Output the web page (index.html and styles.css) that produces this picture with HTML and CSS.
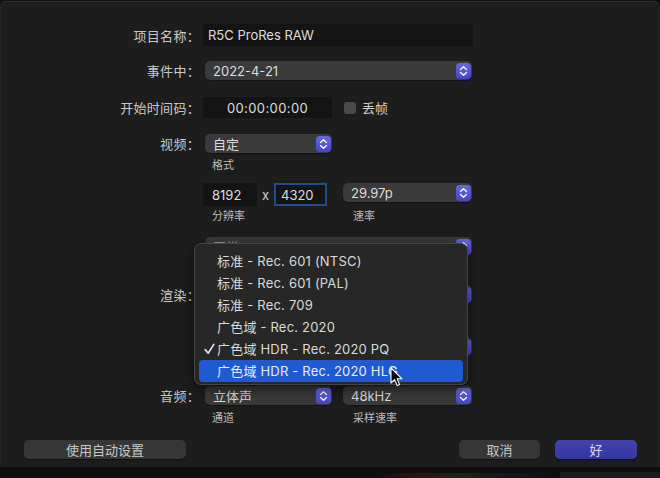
FILE: index.html
```html
<!DOCTYPE html>
<html lang="zh-CN">
<head>
<meta charset="utf-8">
<title>项目设置</title>
<link rel="stylesheet" href="styles.css">
</head>
<body>
<div class="window">
  <div class="form">
    <div class="row r1">
      <div class="label">项目名称：</div>
      <div class="field name">R5C ProRes RAW</div>
    </div>
    <div class="row r2">
      <div class="label">事件中：</div>
      <div class="popup wide"><span>2022-4-21</span><span class="stepper"><svg viewBox="0 0 15 16" width="15" height="16"><path d="M4.5 6.5 L7.5 3.8 L10.5 6.5 M4.5 9.5 L7.5 12.2 L10.5 9.5" fill="none" stroke="#fff" stroke-width="1.3" stroke-linecap="round" stroke-linejoin="round"/></svg></span></div>
    </div>
    <div class="row r3">
      <div class="label">开始时间码：</div>
      <div class="field timecode">00:00:00:00</div>
      <span class="checkbox"></span>
      <span class="check-label">丢帧</span>
    </div>
    <div class="row r4">
      <div class="label">视频：</div>
      <div class="popup half"><span>自定</span><span class="stepper"><svg viewBox="0 0 15 16" width="15" height="16"><path d="M4.5 6.5 L7.5 3.8 L10.5 6.5 M4.5 9.5 L7.5 12.2 L10.5 9.5" fill="none" stroke="#fff" stroke-width="1.3" stroke-linecap="round" stroke-linejoin="round"/></svg></span></div>
    </div>
    <div class="sub s1"><span>格式</span></div>
    <div class="row r5">
      <div class="label"></div>
      <div class="field dim">8192</div>
      <span class="times">x</span>
      <div class="field dim focus">4320</div>
      <div class="popup half right"><span>29.97p</span><span class="stepper"><svg viewBox="0 0 15 16" width="15" height="16"><path d="M4.5 6.5 L7.5 3.8 L10.5 6.5 M4.5 9.5 L7.5 12.2 L10.5 9.5" fill="none" stroke="#fff" stroke-width="1.3" stroke-linecap="round" stroke-linejoin="round"/></svg></span></div>
    </div>
    <div class="sub s2"><span class="sub-a">分辨率</span><span>速率</span></div>
    <div class="row r6">
      <div class="label"></div>
      <div class="popup wide"><span class="peek">正常</span><span class="stepper"><svg viewBox="0 0 15 16" width="15" height="16"><path d="M4.5 6.5 L7.5 3.8 L10.5 6.5 M4.5 9.5 L7.5 12.2 L10.5 9.5" fill="none" stroke="#fff" stroke-width="1.3" stroke-linecap="round" stroke-linejoin="round"/></svg></span></div>
    </div>
    <div class="row r7">
      <div class="label">渲染：</div>
      <div class="popup wide"><span></span><span class="stepper"><svg viewBox="0 0 15 16" width="15" height="16"><path d="M4.5 6.5 L7.5 3.8 L10.5 6.5 M4.5 9.5 L7.5 12.2 L10.5 9.5" fill="none" stroke="#fff" stroke-width="1.3" stroke-linecap="round" stroke-linejoin="round"/></svg></span></div>
    </div>
    <div class="row r8">
      <div class="label"></div>
      <div class="popup wide"><span></span><span class="stepper"><svg viewBox="0 0 15 16" width="15" height="16"><path d="M4.5 6.5 L7.5 3.8 L10.5 6.5 M4.5 9.5 L7.5 12.2 L10.5 9.5" fill="none" stroke="#fff" stroke-width="1.3" stroke-linecap="round" stroke-linejoin="round"/></svg></span></div>
    </div>
    <div class="row r9">
      <div class="label">音频：</div>
      <div class="popup half"><span>立体声</span><span class="stepper"><svg viewBox="0 0 15 16" width="15" height="16"><path d="M4.5 6.5 L7.5 3.8 L10.5 6.5 M4.5 9.5 L7.5 12.2 L10.5 9.5" fill="none" stroke="#fff" stroke-width="1.3" stroke-linecap="round" stroke-linejoin="round"/></svg></span></div>
      <div class="popup half right"><span>48kHz</span><span class="stepper"><svg viewBox="0 0 15 16" width="15" height="16"><path d="M4.5 6.5 L7.5 3.8 L10.5 6.5 M4.5 9.5 L7.5 12.2 L10.5 9.5" fill="none" stroke="#fff" stroke-width="1.3" stroke-linecap="round" stroke-linejoin="round"/></svg></span></div>
    </div>
    <div class="sub s3"><span class="sub-a">通道</span><span>采样速率</span></div>
  </div>
  <div class="buttons">
    <div class="btn auto">使用自动设置</div>
    <div class="spacer"></div>
    <div class="btn cancel">取消</div>
    <div class="btn ok">好</div>
  </div>

  <div class="menu">
    <div class="item">标准 - Rec. 601 (NTSC)</div>
    <div class="item">标准 - Rec. 601 (PAL)</div>
    <div class="item">标准 - Rec. 709</div>
    <div class="item">广色域 - Rec. 2020</div>
    <div class="item checked"><svg class="tick" viewBox="0 0 11 12" width="11" height="12"><path d="M1.2 6.6 L4.2 10.2 L9.8 1.4" fill="none" stroke="#e2e2e2" stroke-width="1.7" stroke-linecap="round" stroke-linejoin="round"/></svg>广色域 HDR - Rec. 2020 PQ</div>
    <div class="item selected">广色域 HDR - Rec. 2020 HLG</div>
  </div>

  <svg class="cursor" viewBox="0 0 13 20" width="13" height="20">
    <path d="M1 1 L1 16 L4.6 12.6 L7.2 18.6 L9.6 17.6 L7.1 11.8 L12 11.8 Z" fill="#000" stroke="#fff" stroke-width="1.1" stroke-linejoin="round"/>
  </svg>
</div>
<div class="strip"><div class="glow"></div><div class="gray"></div></div>
</body>
</html>
```

FILE: styles.css
```css
* { box-sizing: border-box; }

html, body {
  margin: 0;
  padding: 0;
  background: #111;
}

body {
  width: 660px;
  height: 478px;
  overflow: hidden;
  font-family: "Inter", "Noto Sans CJK SC", sans-serif;
  font-size: 13px;
  color: #d6d6d6;
}

.window {
  position: relative;
  height: 466px;
  background: #1d1d1d;
  border-top: 1px solid #2e2e2e;
  border-left: 1px solid #262626;
  border-right: 1px solid #262626;
  margin-top: 1px;
  border-radius: 6px 6px 0 0;
}

.form {
  display: flex;
  flex-direction: column;
  padding-top: 22px;
}

.row {
  display: flex;
  align-items: center;
}

.label {
  width: 199px;
  flex: none;
  text-align: right;
  margin-right: 3px;
  color: #c9c9c9;
  font-size: 13px;
  letter-spacing: 0.3px;
}

.r1 { height: 22px; }
.r2 { height: 19px; margin-top: 15px; }
.r3 { height: 21px; margin-top: 17px; }
.r4 { height: 19px; margin-top: 16px; }
.r5 { height: 23px; margin-top: 10px; }
.r6 { height: 19px; margin-top: 13px; }
.r7 { height: 19px; margin-top: 29px; }
.r8 { height: 19px; margin-top: 33px; }
.r9 { height: 19px; margin-top: 30px; }

.field {
  height: 100%;
  background: #141414;
  color: #dedede;
  display: flex;
  align-items: center;
  padding-left: 5px;
}

.field.name { width: 270px; }
.field.timecode {
  width: 129px;
  justify-content: center;
  padding-left: 0;
  letter-spacing: 0.4px;
}

.checkbox {
  width: 12px;
  height: 12px;
  margin-left: 12px;
  border-radius: 3px;
  background: #4a4a4a;
}

.check-label {
  margin-left: 6px;
  color: #cfcfcf;
}

.field.dim { width: 54px; padding-left: 9px; }
.field.focus {
  width: 53px;
  box-shadow: inset 0 0 0 2px #1e4c8c;
  padding-left: 7px;
}

.times {
  width: 17px;
  text-align: center;
  color: #cfcfcf;
}

.popup {
  height: 19px;
  margin-left: 2px;
  background: #3a3a3a;
  border-radius: 5px;
  display: flex;
  align-items: center;
  justify-content: space-between;
  padding-left: 8px;
  padding-right: 1px;
  color: #dcdcdc;
  box-shadow: 0 1px 1px rgba(0,0,0,0.35);
}

.popup.wide { width: 267px; }
.popup.half { width: 127px; }
.popup.right { margin-left: 11px; width: 129px; }
.r5 .popup.right { margin-left: 16px; height: 19px; align-self: flex-start; }

.peek { color: #9a9a9a; }

.stepper {
  width: 15px;
  height: 16px;
  border-radius: 4px;
  background: linear-gradient(#6868e6, #4646c4);
  display: flex;
  align-items: center;
  justify-content: center;
}

.stepper svg { display: block; }

.sub {
  display: flex;
  padding-left: 211px;
  height: 16px;
  line-height: 16px;
  font-size: 11px;
  color: #bdbdbd;
}

.sub-a { width: 141px; }

.s1 { margin-top: 4px; }
.s2 { margin-top: 2px; }
.s3 { margin-top: 5px; }

.buttons {
  display: flex;
  margin-top: 14px;
  padding: 0 22px 0 23px;
}

.spacer { flex: 1; }

.btn {
  height: 19px;
  border-radius: 5px;
  background: #363636;
  color: #c8c8c8;
  display: flex;
  align-items: center;
  justify-content: center;
  font-size: 13px;
  box-shadow: 0 1px 1px rgba(0,0,0,0.4);
}

.btn.auto { width: 162px; }
.btn.cancel { width: 81px; }
.btn.ok {
  width: 82px;
  margin-left: 15px;
  background: linear-gradient(#4242b0, #36369e);
  color: #d6d6ee;
}

.menu {
  position: absolute;
  left: 193px;
  top: 241px;
  width: 274px;
  height: 142px;
  background: #272727;
  border: 1px solid #464646;
  border-radius: 7px;
  padding: 6px 4px 2px 4px;
  box-shadow: 0 4px 14px rgba(0,0,0,0.55);
}

.item {
  position: relative;
  height: 22px;
  line-height: 22px;
  padding-left: 18px;
  color: #dadada;
  font-size: 13px;
  border-radius: 4px;
  letter-spacing: 0.2px;
}

.tick {
  position: absolute;
  left: 5px;
  top: 5px;
  display: block;
}

.item.selected {
  background: #1f5ad0;
  color: #ececf6;
}

.cursor {
  position: absolute;
  left: 389px;
  top: 365px;
}

.strip {
  position: relative;
  height: 11px;
  background: #0e0e0e;
}

.glow {
  position: absolute;
  left: 370px;
  top: 6px;
  width: 190px;
  height: 5px;
  background: linear-gradient(90deg, rgba(60,20,20,0), rgba(70,30,25,0.5), rgba(30,60,30,0.5), rgba(30,30,70,0.4), rgba(0,0,0,0));
}

.gray {
  position: absolute;
  left: 560px;
  top: 5px;
  width: 100px;
  height: 6px;
  background: #1c1c1c;
}
```
